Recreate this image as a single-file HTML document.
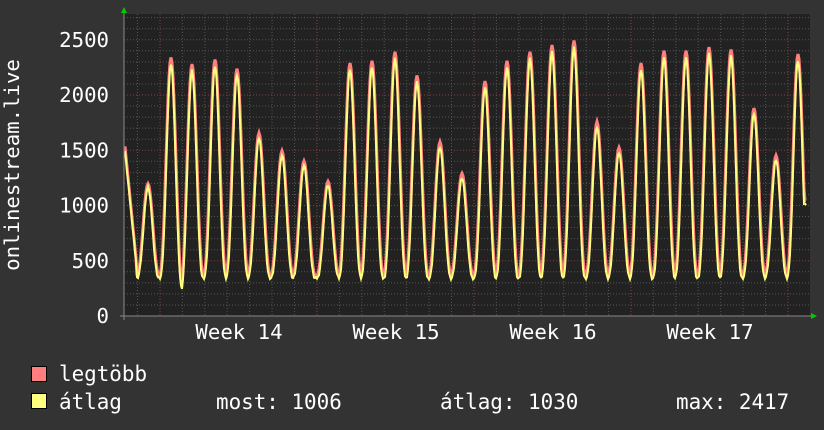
<!DOCTYPE html>
<html><head><meta charset="utf-8"><style>
body{margin:0;background:#333;width:824px;height:430px;overflow:hidden;position:relative;font-family:"DejaVu Sans Mono","Liberation Mono",monospace;color:#fff}
.t{position:absolute;font-size:20.9px;white-space:pre;line-height:1}
.sq{position:absolute;width:14px;height:14px;border:1px solid #000}
</style></head><body>
<svg id="g" width="824" height="430" style="position:absolute;left:0;top:0"></svg>
<div class="t" style="left:59px;top:364px">legtöbb</div>
<div class="t" style="left:59px;top:392px">átlag</div>
<div class="t" style="left:216px;top:392px">most: 1006</div>
<div class="t" style="left:440px;top:392px">átlag: 1030</div>
<div class="t" style="left:676px;top:392px">max: 2417</div>
<div class="sq" style="left:31px;top:366px;background:#ff7f7f"></div>
<div class="sq" style="left:31px;top:393px;background:#ffff7f"></div>
<script>
var s='';
var L=124,R=810,T=14,B=316;
s+='<rect x="'+L+'" y="'+T+'" width="'+(R-L)+'" height="'+(B-T)+'" fill="#222"/>';
function Y(v){return B-v*0.1105;}
for(var v=100;v<=2700;v+=100){var y=Y(v);if(y<T)break;if(v%500==0)continue;s+='<line x1="'+L+'" x2="'+R+'" y1="'+y+'" y2="'+y+'" stroke="#555" stroke-dasharray="1,2"/>';}
for(var x=137.5;x<R;x+=22.43){s+='<line x1="'+x+'" x2="'+x+'" y1="'+T+'" y2="'+B+'" stroke="#555" stroke-dasharray="1,2"/>';}
for(var v=500;v<=2500;v+=500){var y=Y(v);s+='<line x1="'+L+'" x2="'+R+'" y1="'+y+'" y2="'+y+'" stroke="#8a3c3c" stroke-dasharray="1,2"/>';}
[160,317,474,631,788].forEach(function(x){s+='<line x1="'+x+'" x2="'+x+'" y1="'+T+'" y2="'+B+'" stroke="#8a3c3c" stroke-dasharray="1,2"/>';});
var pk=[[148,1150],[171,2270],[192,2210],[215,2250],[237,2170],[259,1600],[282,1440],[304,1350],[328,1170],[350,2220],[372,2240],[395,2320],[417,2110],[440,1520],[462,1240],[485,2060],[507,2240],[530,2320],[552,2380],[574,2420],[597,1700],[619,1470],[641,2220],[664,2330],[686,2330],[709,2360],[731,2340],[754,1820],[776,1400],[798,2300]];
function val(x,w){
 var best=330;
 for(var i=0;i<pk.length;i++){var d=Math.abs(x-pk[i][0]);if(d>w)continue;var f=Math.pow((1+Math.cos(Math.PI*d/w))/2,1.4);var m=330;var v=m+(pk[i][1]-m)*f;if(v>best)best=v;}
 if(x<137)best=Math.max(best,1480-(x-125)*90);
 best-=110*Math.exp(-Math.pow((x-182)/3,2));
 if(x>802)best=Math.max(1000,best);
 return best;
}
var p1='',p2='';
for(var x=125;x<=806;x++){var j=((x*37)%11)/11;var a=val(x,11.5)+j*25;var m=val(x,12.2)*1.02+25;p1+=(x==125?'M':'L')+x+','+Y(m).toFixed(1);p2+=(x==125?'M':'L')+x+','+Y(a).toFixed(1);}
s+='<path d="'+p1+'" fill="none" stroke="#ff7f7f" stroke-width="3"/>';
s+='<path d="'+p2+'" fill="none" stroke="#ffff7f" stroke-width="2"/>';
s+='<line x1="'+(L-4)+'" x2="'+(R+4)+'" y1="'+B+'" y2="'+B+'" stroke="#888"/>';
s+='<line x1="'+L+'" x2="'+L+'" y1="'+(T-4)+'" y2="'+(B+4)+'" stroke="#888"/>';
s+='<polygon points="121,13 127,13 124,7" fill="#0c0"/>';
s+='<polygon points="811,313 811,319 817,316" fill="#0c0"/>';
[0,500,1000,1500,2000,2500].forEach(function(v){s+='<text x="109" y="'+(Y(v)+7)+'" text-anchor="end" fill="#fff" font-size="20.7" font-family="DejaVu Sans Mono,monospace">'+v+'</text>';});
[[239,'Week 14'],[396,'Week 15'],[553,'Week 16'],[710,'Week 17']].forEach(function(w){s+='<text x="'+w[0]+'" y="339" text-anchor="middle" fill="#fff" font-size="20.7" font-family="DejaVu Sans Mono,monospace" xml:space="preserve">'+w[1]+'</text>';});
s+='<text transform="translate(19,165) rotate(-90)" text-anchor="middle" fill="#fff" font-size="20.7" font-family="DejaVu Sans Mono,monospace">onlinestream.live</text>';
document.getElementById('g').innerHTML=s;
</script>
</body></html>
